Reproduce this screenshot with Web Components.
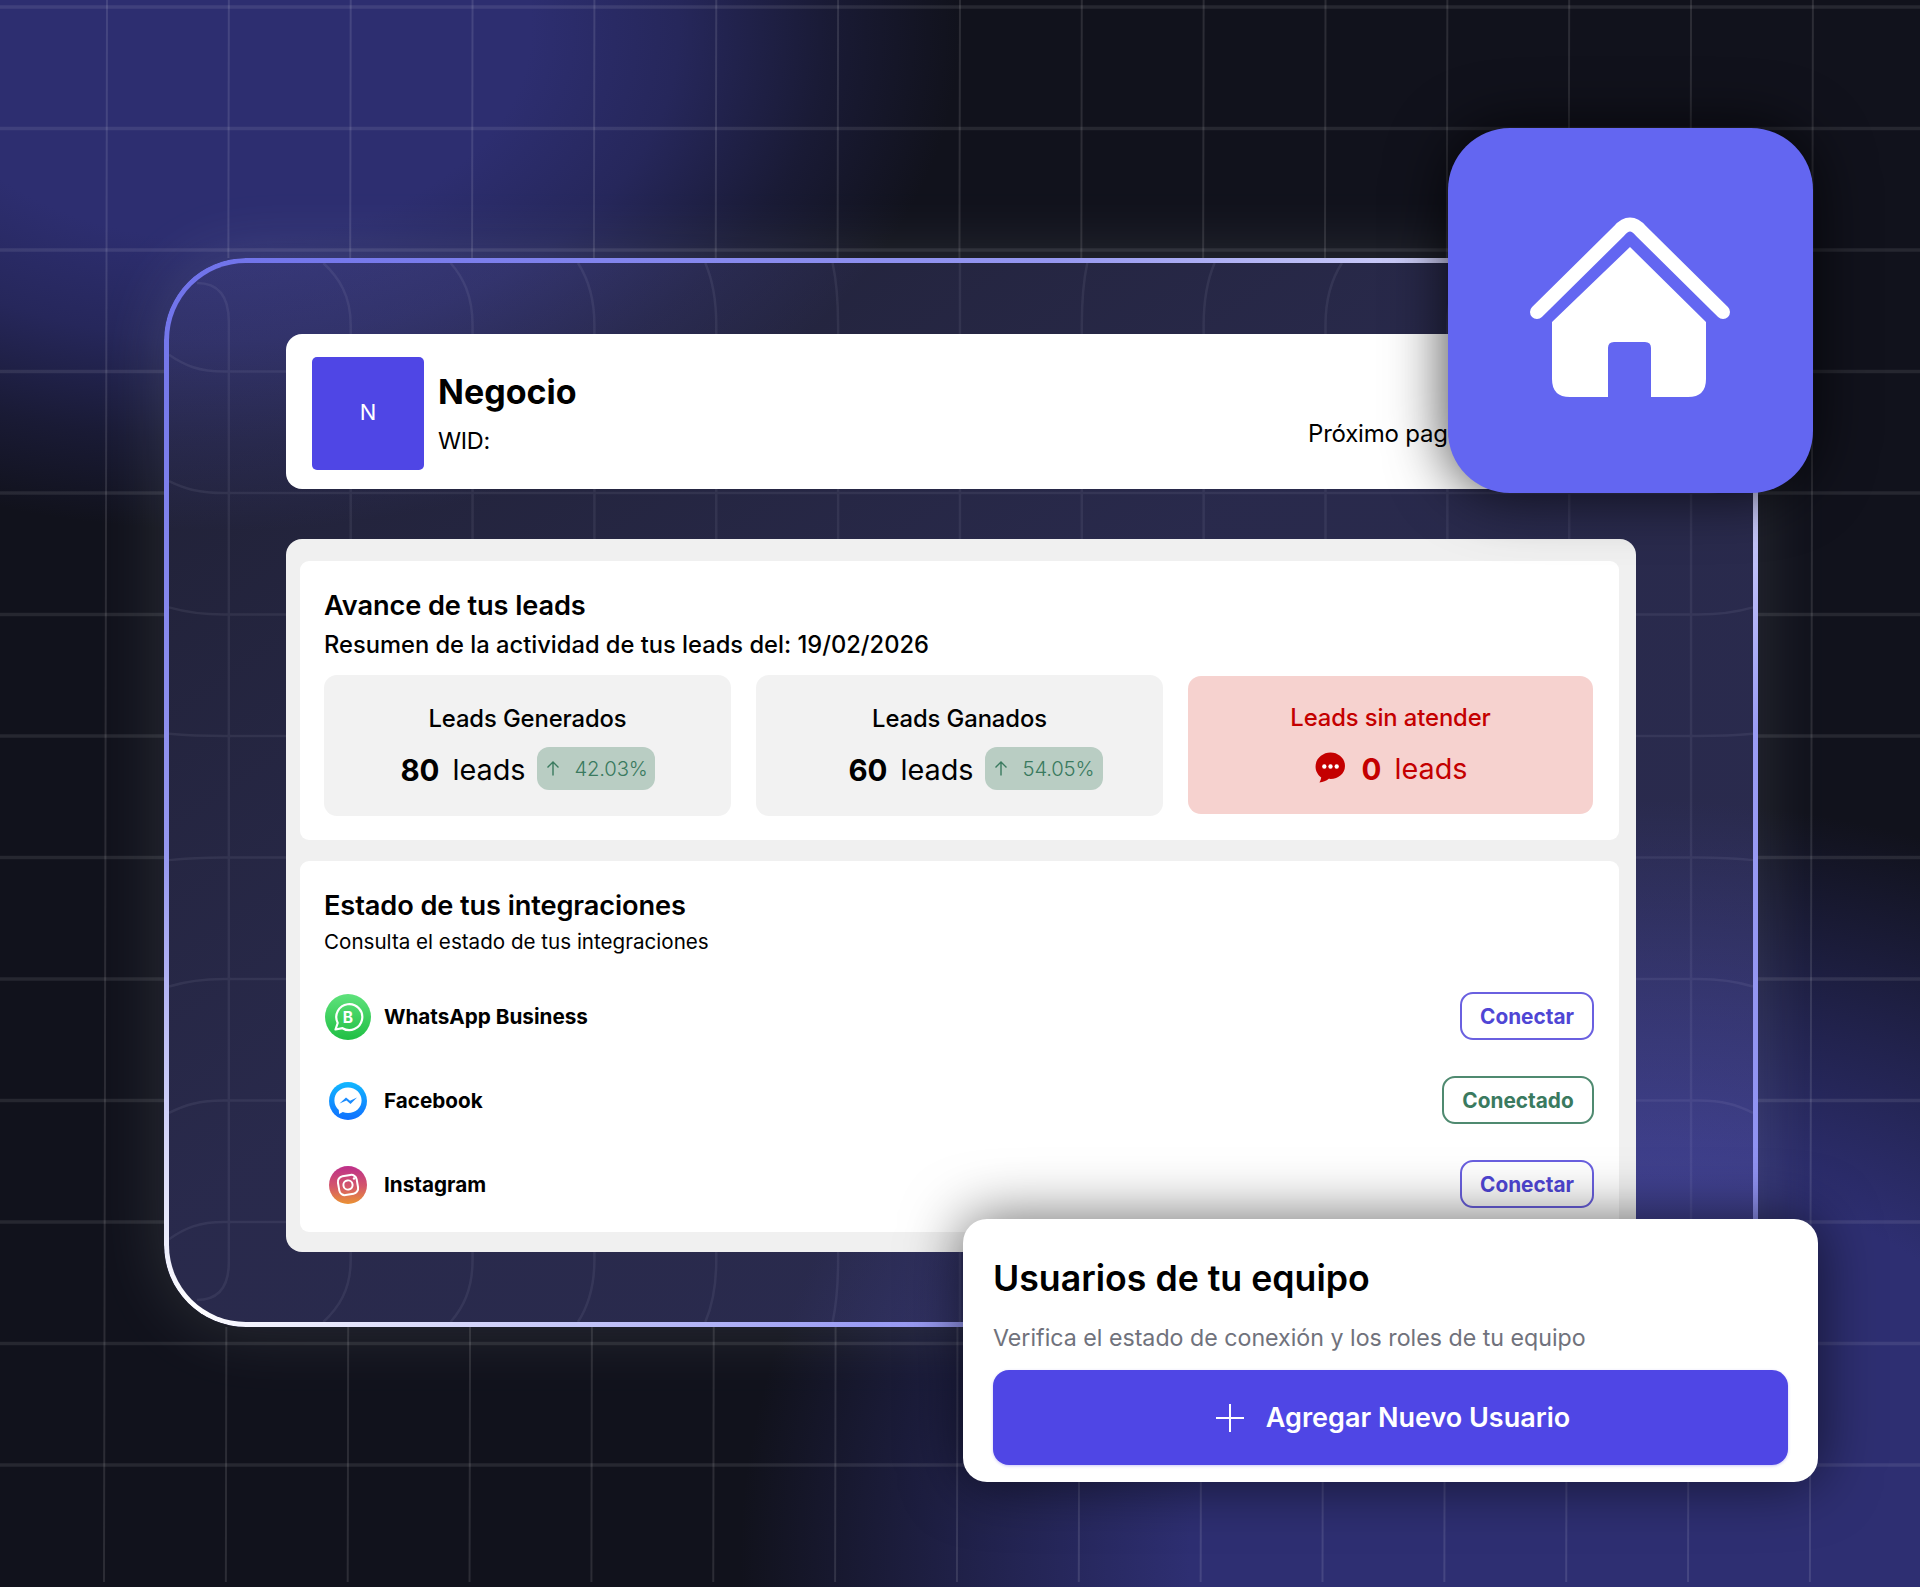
<!DOCTYPE html>
<html lang="es">
<head>
<meta charset="utf-8">
<title>Negocio</title>
<style>
html,body{margin:0;padding:0;background:#11121c;}
body{font-family:"Inter","Liberation Sans",sans-serif;color:#000;}
</style>
</head>
<body>
<app-stage>
  <glass-frame>
    <biz-header name="Negocio" wid="WID:" next="Próximo pago"></biz-header>
    <main-card>
      <info-panel title-text="Avance de tus leads" sub="Resumen de la actividad de tus leads del: 19/02/2026" kind="leads">
        <stat-grid>
          <lead-stat label="Leads Generados" value="80" pct="42.03%"></lead-stat>
          <lead-stat label="Leads Ganados" value="60" pct="54.05%" shift="32"></lead-stat>
          <lead-stat label="Leads sin atender" value="0" alert></lead-stat>
        </stat-grid>
      </info-panel>
      <info-panel title-text="Estado de tus integraciones" sub="Consulta el estado de tus integraciones" kind="int">
        <integration-row name="WhatsApp Business" icon="wa" action="Conectar"></integration-row>
        <integration-row name="Facebook" icon="ms" action="Conectado" ok></integration-row>
        <integration-row name="Instagram" icon="ig" action="Conectar"></integration-row>
      </info-panel>
    </main-card>
  </glass-frame>
  <home-tile></home-tile>
  <team-card></team-card>
</app-stage>
<script>
const FONT='"Inter","Liberation Sans",sans-serif';
function shell(el,html){const r=el.attachShadow({mode:'open'});r.innerHTML=html;return r;}

class GridLayer extends HTMLElement{
  connectedCallback(){
    const L=169,R=1753,T=263,B=1322;
    let v='',h='',lens='';
    for(let k=0;k<15;k++){
      const x=107+121.85*k, xb=x-3;
      const at=y=>x-(3*y/1587);
      if(x>L&&x<R){
        v+=`M${at(0)},0L${at(258)},258M${at(1327)},1327L${xb},1582`;
        if(x<240){
          lens+=`M${x-32},283Q${x},283 ${x},322L${x},1262Q${x},1300 ${x-32},1300`;
        }else{
          const b=0.045*(x-960);
          lens+=`M${x+b},${T}C${x+b*.45},${T+14} ${x},${T+32} ${x},${T+62}L${x},${B-62}C${x},${B-32} ${x+b*.45},${B-14} ${x+b},${B}`;
        }
      }else v+=`M${at(0)},0L${xb},1582`;
    }
    for(let k=0;k<13;k++){
      const y=7+121.5*k;
      if(y>T&&y<B){
        h+=`M0,${y}L164,${y}M1758,${y}L1920,${y}`;
        const b=0.04*(y-792);
        lens+=`M${L},${y+b}C${L+16},${y+b*.35} ${L+30},${y} ${L+55},${y}L${R-55},${y}C${R-30},${y} ${R-16},${y+b*.35} ${R},${y+b}`;
      }else h+=`M0,${y}L1920,${y}`;
    }
    shell(this,`<style>:host{position:absolute;inset:0;display:block;pointer-events:none}svg{display:block;filter:blur(.5px)}</style>
    <svg width="1920" height="1587" viewBox="0 0 1920 1587" fill="none">
      <path d="${v}" stroke="#fff" stroke-opacity=".115" stroke-width="2"/>
      <path d="${h}" stroke="#fff" stroke-opacity=".09" stroke-width="3.5"/>
      <path d="${lens}" stroke="#fff" stroke-opacity=".075" stroke-width="2.5"/>
    </svg>`);
  }
}
customElements.define('grid-layer',GridLayer);

class AppStage extends HTMLElement{
  connectedCallback(){
    shell(this,`<style>
    :host{display:block;position:relative;width:1920px;height:1587px;overflow:hidden;box-sizing:border-box;
      padding:258px 0 0 164px;font-family:${FONT};
      background:
        radial-gradient(ellipse 740px 500px at 220px 30px,#2d2e70 0 42%,rgba(45,46,112,.75) 62%,rgba(45,46,112,.3) 82%,rgba(45,46,112,0) 100%),
        radial-gradient(ellipse 900px 760px at 1640px 1560px,#2e2f72 0 50%,rgba(45,46,112,.6) 72%,rgba(45,46,112,0) 100%),
        #11121c;}
    </style><grid-layer></grid-layer><slot></slot>`);
  }
}
customElements.define('app-stage',AppStage);

class GlassFrame extends HTMLElement{
  connectedCallback(){
    shell(this,`<style>
    :host{display:block;position:relative;box-sizing:border-box;width:1594px;height:1069px;padding:76px 0 0 122px;
      border-radius:82px;background:linear-gradient(to bottom right,rgba(105,105,170,.16) 0,rgba(117,117,228,.24) 45%,rgba(117,117,228,.25) 100%);box-shadow:0 0 70px rgba(210,230,230,.14);}
    .ring{position:absolute;inset:0;border-radius:82px;padding:5px;pointer-events:none;
      background:linear-gradient(to bottom right,#6e71ea 0,#9597f0 28%,#fff 50%,#9a9cf4 72%,#8b8ef0 100%);
      -webkit-mask:linear-gradient(#000 0 0) content-box,linear-gradient(#000 0 0);
      -webkit-mask-composite:xor;mask-composite:exclude;}
    .in{position:relative;}
    </style><div class="ring"></div><div class="in"><slot></slot></div>`);
  }
}
customElements.define('glass-frame',GlassFrame);

class BizHeader extends HTMLElement{
  connectedCallback(){
    const a=n=>this.getAttribute(n);
    shell(this,`<style>
    :host{display:flex;position:relative;box-sizing:border-box;width:1350px;height:155px;background:#fff;border-radius:16px;padding:23px 0 0 26px;gap:14px;color:#000;}
    .av{width:112px;height:113px;background:#4f46e5;border-radius:5px;color:#fff;font-size:22px;line-height:110px;text-align:center;}
    .t{display:flex;flex-direction:column;}
    h1{margin:15px 0 0;font-size:34px;line-height:40px;font-weight:700;}
    p{margin:14px 0 0;font-size:23.500px;line-height:30px;font-weight:400;letter-spacing:-.3px;}
    .n{position:absolute;left:1022px;top:85px;font-size:24px;line-height:30px;letter-spacing:-.2px;white-space:nowrap;}
    </style><div class="av">N</div><div class="t"><h1>${a('name')}</h1><p>${a('wid')}</p></div><div class="n">${a('next')}</div>`);
  }
}
customElements.define('biz-header',BizHeader);

class MainCard extends HTMLElement{
  connectedCallback(){
    shell(this,`<style>
    :host{display:flex;flex-direction:column;gap:21px;box-sizing:border-box;width:1350px;height:713px;margin-top:50px;
      background:#f0f0f0;border-radius:16px;padding:22px 17px 20px 14px;}
    </style><slot></slot>`);
  }
}
customElements.define('main-card',MainCard);

class InfoPanel extends HTMLElement{
  connectedCallback(){
    const a=n=>this.getAttribute(n), leads=a('kind')==='leads';
    shell(this,`<style>
    :host{display:block;box-sizing:border-box;background:#fff;border-radius:9px;padding:${leads?'30px 26px 24px 24px':'30px 25px 5px 24px'};height:${leads?279:371}px;}
    h2{margin:0;font-size:27.200px;line-height:30px;font-weight:600;color:#000;letter-spacing:-.1px}
    p{margin:${leads?9:7}px 0 ${leads?15:19}px;font-size:${leads?23.700:20.600}px;line-height:${leads?30:28}px;font-weight:${leads?500:400};color:#000;}
    </style><h2>${a('title-text')}</h2><p>${a('sub')}</p><slot></slot>`);
  }
}
customElements.define('info-panel',InfoPanel);

class StatGrid extends HTMLElement{
  connectedCallback(){
    shell(this,`<style>:host{display:grid;grid-template-columns:407px 407px 405px;gap:25px;align-items:start}</style><slot></slot>`);
  }
}
customElements.define('stat-grid',StatGrid);

class LeadStat extends HTMLElement{
  connectedCallback(){
    const a=n=>this.getAttribute(n), alert=this.hasAttribute('alert'), shift=a('shift')||0;
    const chat=`<svg class="chat" width="33" height="31" viewBox="0 0 32 30"><path fill="#c40000" d="M16 .5C8.300.5 1.500 6.400 1.500 14c0 4.600 2.300 8.300 5.500 10.700-.2 1.800-.8 3.300-1.700 4.800 3.400-.2 6.600-1.500 9-3.500.8.100 1.200.100 1.700.100 7.700 0 14-5.600 14-12.100C30.500 6.400 23.700.500 16 .500z"/><circle cx="10" cy="14" r="2.100" fill="#fff"/><circle cx="16" cy="14" r="2.100" fill="#fff"/><circle cx="22" cy="14" r="2.100" fill="#fff"/></svg>`;
    const arrow=`<svg width="14" height="15" viewBox="0 0 14 15" fill="none" stroke="#3a7a5f" stroke-width="1.400"><path d="M7 14.500V1M1.500 6.500 7 1l5.500 5.500"/></svg>`;
    shell(this,`<style>
    :host{display:block;box-sizing:border-box;height:${alert?138:141}px;margin-top:${alert?1:0}px;border-radius:13px;
      background:${alert?'#f6d2cf':'#f2f2f2'};color:${alert?'#c40000':'#000'};padding-top:${alert?27:29}px;text-align:center;}
    .l{font-size:23.800px;line-height:30px;font-weight:500;letter-spacing:-.1px}
    .v{display:flex;justify-content:center;align-items:center;height:43px;margin-top:13px;padding-left:${shift}px;}
    b{font-size:29.500px;font-weight:700;margin-right:13px;position:relative;top:1px}
    .u{font-size:28.800px;font-weight:400;position:relative;top:1px}
    .chat{margin-right:15px;}
    .b{box-sizing:border-box;display:flex;align-items:center;width:118px;height:43px;margin-left:11px;background:#b9cdc3;border-radius:12px;color:#3a7a5f;font-size:20.300px;font-weight:300;padding-left:9px;gap:15px;letter-spacing:-.2px}
    </style><div class="l">${a('label')}</div><div class="v">${alert?chat:''}<b>${a('value')}</b><span class="u">leads</span>${alert?'':`<span class="b">${arrow}<span>${a('pct')}</span></span>`}</div>`);
  }
}
customElements.define('lead-stat',LeadStat);

const ICONS={
 wa:`<svg width="46" height="46" viewBox="0 0 46 46"><defs><linearGradient id="g" x1="0" y1="0" x2="0" y2="1"><stop offset="0" stop-color="#5fe27c"/><stop offset="1" stop-color="#20bf44"/></linearGradient></defs><circle cx="23" cy="23" r="23" fill="url(#g)"/><path d="M10.500 35.500 12.700 29A13 13 0 1 1 17.500 34.200Z" fill="none" stroke="#fff" stroke-width="2.200" stroke-linejoin="round"/><text x="23" y="28.500" text-anchor="middle" font-family="Inter,sans-serif" font-weight="700" font-size="15.500" fill="#fff">B</text></svg>`,
 ms:`<svg width="38" height="38" viewBox="0 0 38 38"><defs><linearGradient id="g" x1="0" y1="0" x2="0" y2="1"><stop offset="0" stop-color="#12b8ff"/><stop offset="1" stop-color="#1070ff"/></linearGradient></defs><circle cx="19" cy="19" r="19" fill="url(#g)"/><path d="M19 5.500C11.300 5.500 5.400 11.100 5.400 18.400c0 3.900 1.700 7.200 4.400 9.500l.3 4 3.700-1.800c1.700.6 3.500.9 5.200.9 7.700 0 13.600-5.600 13.600-12.600S26.700 5.500 19 5.500z" fill="#fff"/><path d="M10.500 21.500 17 15.500l4 3.200 7-3.200-6.500 6.500-4-3.400z" fill="#1a8cff"/></svg>`,
 ig:`<svg width="38" height="38" viewBox="0 0 38 38"><defs><linearGradient id="g" x1="0" y1="0" x2="0" y2="1"><stop offset="0" stop-color="#bd2f8a"/><stop offset=".55" stop-color="#d4586a"/><stop offset="1" stop-color="#ea9233"/></linearGradient></defs><circle cx="19" cy="19" r="19" fill="url(#g)"/><g transform="rotate(-10 19 19)" fill="none" stroke="#fff" stroke-width="2"><rect x="9.500" y="9.500" width="19" height="19" rx="5.500"/><circle cx="19" cy="19" r="4.600"/></g><circle cx="25" cy="12.500" r="1.200" fill="#fff"/></svg>`
};
class IntegrationRow extends HTMLElement{
  connectedCallback(){
    const a=n=>this.getAttribute(n), ok=this.hasAttribute('ok');
    shell(this,`<style>
    :host{display:flex;align-items:center;height:84px;}
    .i{width:48px;display:flex;justify-content:center;margin-right:12px;}
    svg{display:block}
    .n{flex:1;font-size:20.700px;font-weight:700;color:#000;position:relative;top:-1px}
    button{font:700 20.800px ${FONT};box-sizing:border-box;height:48px;width:${ok?152:134}px;border-radius:13px;background:transparent;border:2px solid ${ok?'#4f8a70':'#6a60e0'};color:${ok?'#3a7a5f':'#4f46d5'};padding:0;position:relative;top:-1px}
    </style><span class="i">${ICONS[a('icon')]}</span><span class="n">${a('name')}</span><button>${a('action')}</button>`);
  }
}
customElements.define('integration-row',IntegrationRow);

class HomeTile extends HTMLElement{
  connectedCallback(){
    shell(this,`<style>
    :host{position:absolute;left:1448px;top:128px;width:365px;height:365px;border-radius:62px;background:#6366f1;box-shadow:0 0 60px rgba(0,0,0,.75);display:block;}
    svg{display:block}
    </style><svg width="365" height="365" viewBox="0 0 365 365">
      <path d="M89 184 171 103Q182 90 193 103L275 184" fill="none" stroke="#fff" stroke-width="14" stroke-linecap="round" stroke-linejoin="round"/>
      <path fill="#fff" d="M182 119 258 194V251Q258 269 240 269H203V220Q203 214 197 214H166Q160 214 160 220V269H122Q104 269 104 251V194Z"/>
    </svg>`);
  }
}
customElements.define('home-tile',HomeTile);

class TeamCard extends HTMLElement{
  connectedCallback(){
    shell(this,`<style>
    :host{position:absolute;left:963px;top:1219px;box-sizing:border-box;width:855px;height:263px;background:#fff;border-radius:24px;padding:39px 30px 0;box-shadow:0 0 60px rgba(0,0,0,.6);display:block;}
    h3{margin:0;font-size:35.700px;line-height:40px;font-weight:600;color:#000;}
    p{margin:25px 0 0;font-size:23.200px;line-height:30px;color:#70727c;font-weight:400;}
    .btn{margin-top:17px;height:95px;border-radius:16px;background:#4f46e5;color:#fff;display:flex;align-items:center;justify-content:center;gap:22px;padding-left:5px;font-size:27px;font-weight:600;box-shadow:0 1px 3px rgba(79,70,229,.3);}
    svg{display:block}
    </style><h3>Usuarios de tu equipo</h3><p>Verifica el estado de conexión y los roles de tu equipo</p>
    <div class="btn"><svg width="28" height="28" viewBox="0 0 28 28" stroke="#fff" stroke-width="2"><path d="M14 0V28M0 14H28"/></svg><span>Agregar Nuevo Usuario</span></div>`);
  }
}
customElements.define('team-card',TeamCard);
</script>
</body>
</html>
